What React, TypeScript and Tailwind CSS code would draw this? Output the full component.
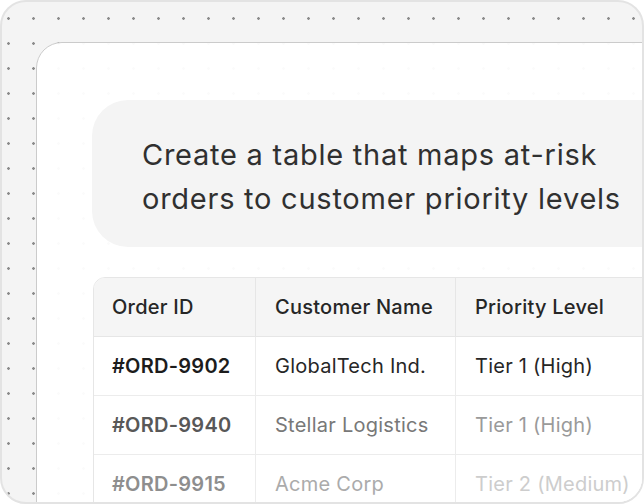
export default function App() {
  const rows = [
    { id: "#ORD-9902", name: "GlobalTech Ind.", tier: "Tier 1 (High)", c: ["text-[#1c1c1c]", "text-[#262626]", "text-[#262626]"] },
    { id: "#ORD-9940", name: "Stellar Logistics", tier: "Tier 1 (High)", c: ["text-[#585858]", "text-[#787878]", "text-[#9a9a9a]"] },
    { id: "#ORD-9915", name: "Acme Corp", tier: "Tier 2 (Medium)", c: ["text-[#8e8e8e]", "text-[#ababab]", "text-[#cdcdcd]"] },
  ];
  return (
    <div className="w-[644px] h-[504px] bg-white">
      <div className="w-[644px] h-[504px] rounded-[26px] border-2 border-[#e3e3e3] bg-[#f4f4f4] bg-[radial-gradient(circle,#8c8c8c_1px,transparent_1.6px)] bg-[size:25px_25px] bg-[position:-6px_4px] overflow-hidden pl-[34px] pt-[40px] font-['Inter',sans-serif]">
        <div className="w-[760px] h-[600px] rounded-tl-[26px] border border-[#cbcbcb] bg-white/[0.96] pl-[55px] pt-[57px]">
          <div className="w-[640px] rounded-[36px] bg-[#f4f4f4] pl-[50px] pt-[33px] pb-[26px] text-[29px] leading-[44px] tracking-[0.75px] text-[#303030] whitespace-nowrap">
            Create a table that maps at-risk
            <br />
            orders to customer priority levels
          </div>
          <div className="mt-[30px] ml-[1px] w-[640px] rounded-[12px] border border-[#e6e6e6] bg-white overflow-hidden text-[20px] tracking-[0.25px]">
            <div className="flex h-[59px] border-b border-[#e6e6e6] bg-[#f5f5f5] font-medium text-[#262626]">
              <div className="w-[162px] border-r border-[#e6e6e6] pl-[18px] flex items-center">Order ID</div>
              <div className="w-[200px] border-r border-[#e6e6e6] pl-[19px] flex items-center">Customer Name</div>
              <div className="flex-1 pl-[19px] flex items-center">Priority Level</div>
            </div>
            {rows.map((r) => (
              <div key={r.id} className="flex h-[59px] border-b border-[#ececec]">
                <div className={"w-[162px] border-r border-[#ececec] pl-[18px] flex items-center font-semibold " + r.c[0]}>{r.id}</div>
                <div className={"w-[200px] border-r border-[#ececec] pl-[19px] flex items-center " + r.c[1]}>{r.name}</div>
                <div className={"flex-1 pl-[19px] flex items-center " + r.c[2]}>{r.tier}</div>
              </div>
            ))}
          </div>
        </div>
      </div>
    </div>
  );
}
